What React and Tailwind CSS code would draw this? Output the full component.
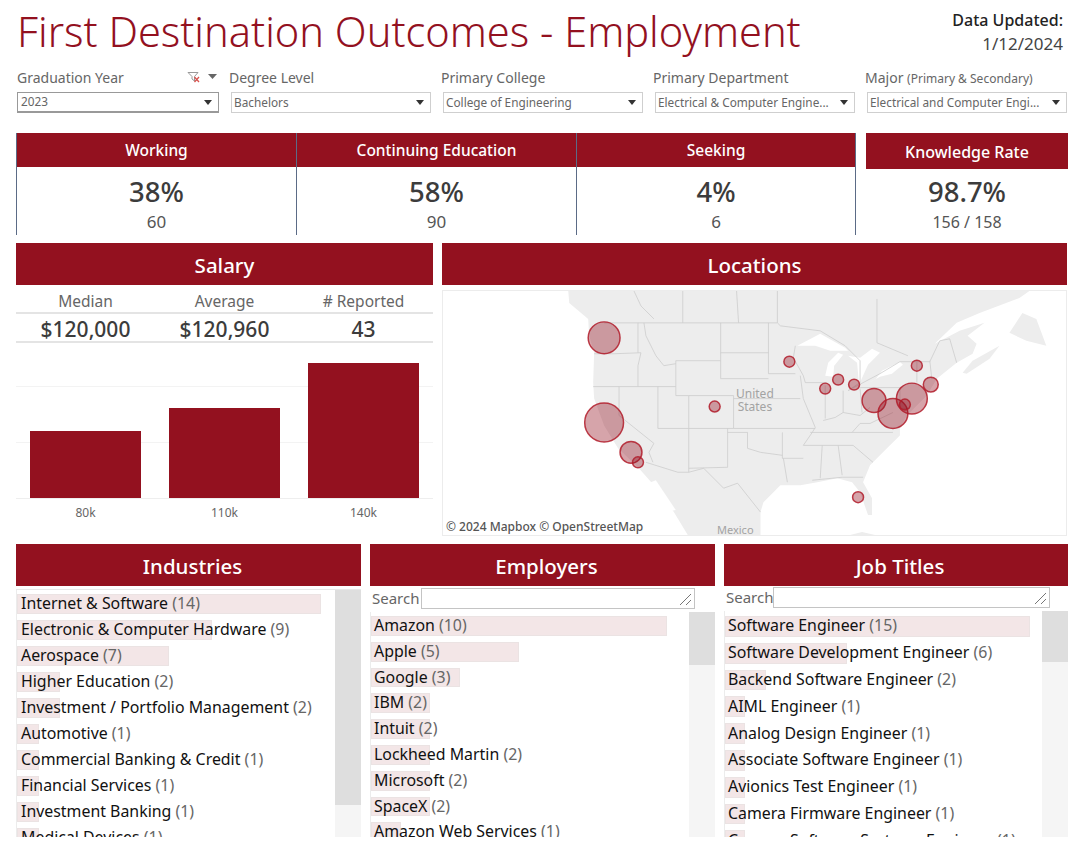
import React from 'react';

const filters = [
  { label: 'Graduation Year', value: '2023', active: true },
  { label: 'Degree Level', value: 'Bachelors' },
  { label: 'Primary College', value: 'College of Engineering' },
  { label: 'Primary Department', value: 'Electrical & Computer Engine...' },
  { label: 'Major', sub: '(Primary & Secondary)', value: 'Electrical and Computer Engi...' },
];

const kpis = [
  { title: 'Working', pct: '38%', count: '60' },
  { title: 'Continuing Education', pct: '58%', count: '90' },
  { title: 'Seeking', pct: '4%', count: '6' },
];

const industries = [
  ['Internet & Software', 14], ['Electronic & Computer Hardware', 9], ['Aerospace', 7], ['Higher Education', 2],
  ['Investment / Portfolio Management', 2], ['Automotive', 1], ['Commercial Banking & Credit', 1],
  ['Financial Services', 1], ['Investment Banking', 1], ['Medical Devices', 1],
];

const employers = [
  ['Amazon', 10], ['Apple', 5], ['Google', 3], ['IBM', 2], ['Intuit', 2], ['Lockheed Martin', 2],
  ['Microsoft', 2], ['SpaceX', 2], ['Amazon Web Services', 1],
];

const jobTitles = [
  ['Software Engineer', 15], ['Software Development Engineer', 6], ['Backend Software Engineer', 2],
  ['AIML Engineer', 1], ['Analog Design Engineer', 1], ['Associate Software Engineer', 1],
  ['Avionics Test Engineer', 1], ['Camera Firmware Engineer', 1], ['Camera Software Systems Engineer', 1],
];

const bubbles = [
  [603, 337, 16], [603, 422, 19.5], [630, 452, 11], [637, 462, 5.5], [714, 406, 5.5], [789, 361, 5.5],
  [838, 379, 5.5], [825, 388, 5.5], [854, 384, 5.5], [874, 400, 12], [893, 413, 15], [912, 398, 15.5],
  [905, 404, 5.5], [931, 384, 7.5], [917, 365, 5.5], [858, 497, 5.5],
];

const borders = [
  'M603 322H777L780 325L820 330L845 345L860 360V382L848 390L880 373L900 361H930L940 340L950 338L957 362',
  'M633 290L640 305L653 318M682 290V322M736 290L738 322M777 290V322M877 298V342L908 355',
  'M593 353H613L640 352M637 322V352M640 352L637 365V386M592 386H675M643 322L645 335L655 355L663 365L675 363',
  'M720 322V378M675 360H720M675 360V395H688M688 395H733V428H688M618 386V415L653 443M657 386V428H688M688 395V472',
  'M653 443L648 452L652 462M727 428V467L688 468M645 462L677 472H688L703 468L723 488L737 483L760 512',
  'M720 352H768M720 378H768M768 322L768 373H795M795 345L793 357L803 375L805 382H827M733 398H800M800 375L803 398L815 427',
  'M825 385V418M810 432H893M733 428H815M727 432H747V448L760 452L782 455M782 432V458H803M783 458L787 482M822 445L820 478',
  'M838 445L842 475M803 445H853L873 462M812 480L842 477H863M843 390V412M823 420L835 417L843 412L860 415L870 407',
  'M860 388L862 412M860 387H900V408H910M852 432L860 423H870L893 412M917 360V382M930 360L932 378M803 445L812 432L815 427',
];

const Header = ({ children, className }) => (
  <div className={`bg-[#93111f] text-white flex items-center justify-center font-medium ${className}`}>{children}</div>
);

const FilterIcon = () => (
  <svg className="w-[32px] h-[12px]" viewBox="0 0 32 12">
    <path d="M1 1.500H11L7.500 5.500V10L5 8V5.500Z" fill="none" stroke="#999" strokeWidth="1" />
    <path d="M7.500 6L12 11M12 6L7.500 11" stroke="#d9534f" strokeWidth="1.3" />
    <path d="M21 3H30L25.500 8Z" fill="#666" />
  </svg>
);

const Caret = () => (
  <svg className="w-[8px] h-[5px] shrink-0" viewBox="0 0 8 5">
    <path d="M0 0H8L4 5Z" fill="#333" />
  </svg>
);

const Filter = ({ label, sub, value, active }) => (
  <div className="w-[202px] flex flex-col">
    <div className="h-[20px] flex items-center justify-between text-[14px] text-[#666]">
      <span className="whitespace-nowrap">
        {label} {sub && <span className="text-[12px]">{sub}</span>}
      </span>
      {active && <FilterIcon />}
    </div>
    <div className={`mt-[5px] h-[21px] bg-white border flex items-center justify-between pr-[6px] text-[11.8px] text-[#666] ${active ? 'pl-[3px] border-[#999] border-b-2' : 'pl-[2px] ml-[2px] border-[#cfcfcf]'}`}>
      <span className="truncate">{value}</span>
      <Caret />
    </div>
  </div>
);

const Kpi = ({ title, pct, count }) => (
  <div className="w-[280px] border-l border-[#5b6b86] last:border-r">
    <Header className="h-[34px] pt-[1px] text-[15.5px]">{title}</Header>
    <div className="flex flex-col items-center pt-[7px]">
      <span className="text-[27.5px] leading-[36px] font-medium text-[#3c3c3c]">{pct}</span>
      <span className="text-[17px] leading-[24px] text-[#555]">{count}</span>
    </div>
  </div>
);

const SalaryBar = ({ top }) => (
  <div className="w-[111px] bg-[#93111f]" style={{ height: 135 - top }} />
);

const SearchBox = ({ className, labelClass }) => (
  <div className={`flex items-center h-[22px] ${className}`}>
    <span className={`pl-[2px] text-[15px] text-[#666] ${labelClass}`}>Search</span>
    <div className="relative flex-1 h-[21px] border border-[#c4c4c4] bg-white">
      <svg className="absolute right-[2px] bottom-[2px] w-[14px] h-[14px]" viewBox="0 0 14 14">
        <path d="M2 13L13 2M8 13L13 8" stroke="#777" strokeWidth="1" />
      </svg>
    </div>
  </div>
);

const RankList = ({ rows, unit, step, thumb, top, textClass }) => (
  <div className="flex h-full">
    <div className="flex-1 min-w-0 border-l border-[#ececec]" style={{ paddingTop: top }}>
      {rows.map(([name, n]) => (
        <div key={name} className="relative flex items-center whitespace-nowrap text-[15.9px]" style={{ height: step }}>
          <div className="absolute left-0 top-[3px] bottom-[3px] bg-[#f3e6e7] border border-[#ebe3e3]" style={{ width: n * unit }} />
          <span className={`relative text-[#111] ${textClass}`}>
            {name} <span className="text-[#666]">({n})</span>
          </span>
        </div>
      ))}
    </div>
    <div className="w-[26px] shrink-0 bg-[#f5f5f5]">
      <div className="bg-[#dedede]" style={{ height: thumb }} />
    </div>
  </div>
);

const UsMap = () => (
  <div className="relative mt-[5px] h-[246px] border border-[#ececec] overflow-hidden">
    <svg className="absolute inset-0 w-full h-full" viewBox="442 290 624 245">
      <path
        d="M567 290L568 302L587 318L588 335L593 352L592 382L593 398L603 425L617 448L637 467L653 485L673 512L687 535H760V512L763 502L780 485L800 485L817 482L837 478L852 482L860 492L868 515L872 515L872 498L863 482L870 465L887 448L900 435V428L907 415L927 395L937 378L957 362L973 353L977 343L968 335L985 322L960 330L935 343L957 322L980 312L1020 297L1030 290Z"
        fill="#ededed"
      />
      <path d="M963 372L973 360L1000 345L990 358L967 373Z" fill="#ededed" />
      <path d="M1010 332L1023 312L1037 318L1047 345L1027 340Z" fill="#ededed" />
      <path d="M850 535L862 532L875 535Z" fill="#ededed" />
      <path d="M797 345L820 333L845 347L848 350L830 350L815 345Z" fill="#fff" />
      <path d="M825 375L828 362L838 352L843 354L834 365L833 376Z" fill="#fff" />
      <path d="M848 355L860 357L872 348L880 352L868 364L859 384L857 362Z" fill="#fff" />
      <path d="M860 387L876 378L882 370L900 361L903 364L892 373L880 376Z" fill="#fff" />
      <path d="M642 485L655 480L675 510L665 512Z" fill="#fff" />
      {borders.map((d, i) => (
        <path key={i} d={d} fill="none" stroke="#cdcdcd" strokeWidth="0.8" />
      ))}
      {bubbles.map(([cx, cy, r], i) => (
        <circle key={i} cx={cx} cy={cy} r={r} fill="#93111f" fillOpacity="0.38" stroke="#b11c2a" strokeOpacity="0.85" strokeWidth="1.5" />
      ))}
    </svg>
    <span className="absolute left-[293px] top-[96px] text-[12px] leading-[13px] text-center text-[#a3a3a3]">
      United
      <br />
      States
    </span>
    <span className="absolute left-[274px] top-[232px] text-[11px] leading-[13px] text-[#a3a3a3]">Mexico</span>
    <span className="absolute left-[3px] top-[228px] text-[12px] leading-[15px] font-medium text-[#555] bg-white/80">© 2024 Mapbox  © OpenStreetMap</span>
  </div>
);

export default function App() {
  return (
    <div className="w-[1080px] h-[847px] overflow-hidden bg-white pl-[16px] pr-[12px] font-['Noto_Sans',sans-serif]">
      <div className="h-[837px] overflow-hidden">
        <div className="h-[64px] flex justify-between">
          <h1 className="pl-[1px] pt-[6px] text-[41.5px] leading-[50px] font-light text-[#93111f] whitespace-nowrap">First Destination Outcomes - Employment</h1>
          <div className="pt-[9px] pr-[5px] text-right leading-[23px] text-[#222]">
            <div className="text-[16px] font-medium">Data Updated:</div>
            <div className="text-[17px] text-[#444]">1/12/2024</div>
          </div>
        </div>

        <div className="flex gap-[10px] pl-[1px] pt-[3px]">
          {filters.map((f) => (
            <Filter key={f.label} {...f} />
          ))}
        </div>

        <div className="mt-[20px] h-[102px] flex justify-between">
          <div className="flex">
            {kpis.map((k) => (
              <Kpi key={k.title} {...k} />
            ))}
          </div>
          <div className="w-[202px]">
            <Header className="h-[36px] pt-[1px] text-[16px]">Knowledge Rate</Header>
            <div className="flex flex-col items-center pt-[5px]">
              <span className="text-[27.5px] leading-[36px] font-medium text-[#3c3c3c]">98.7%</span>
              <span className="text-[16px] leading-[24px] text-[#555]">156 / 158</span>
            </div>
          </div>
        </div>

        <div className="mt-[8px] h-[292px] flex justify-between">
          <div className="w-[417px]">
            <Header className="h-[42px] pt-[2px] text-[20.5px]">Salary</Header>
            <div className="grid grid-cols-3 h-[29px] pt-[5px] items-center text-center text-[15.5px] text-[#666] border-b-2 border-[#e4e4e4]">
              <span>Median</span>
              <span>Average</span>
              <span># Reported</span>
            </div>
            <div className="grid grid-cols-3 h-[29px] items-center text-center text-[21px] font-medium text-[#3c3c3c] border-b-2 border-[#e4e4e4]">
              <span>$120,000</span>
              <span>$120,960</span>
              <span>43</span>
            </div>
            <div className="mt-[9px] h-[147px] flex flex-col justify-end border-b border-[#eee] relative">
              <div className="absolute left-0 right-0 top-[34px] border-t border-[#f3f3f3]" />
              <div className="absolute left-0 right-0 top-[90px] border-t border-[#f3f3f3]" />
              <div className="relative grid grid-cols-3 items-end justify-items-center">
                <SalaryBar top={68} />
                <SalaryBar top={45} />
                <SalaryBar top={0} />
              </div>
            </div>
            <div className="grid grid-cols-3 pt-[5px] text-center text-[12px] text-[#666]">
              <span>80k</span>
              <span>110k</span>
              <span>140k</span>
            </div>
          </div>
          <div className="w-[625px] mr-[1px]">
            <Header className="h-[42px] pt-[2px] text-[20.5px]">Locations</Header>
            <UsMap />
          </div>
        </div>

        <div className="mt-[9px] grid grid-cols-[345px_345px_344px] gap-[9px]">
          <div>
            <Header className="h-[42px] pt-[2px] pl-[8px] text-[20.5px]">Industries</Header>
            <div className="h-[251px] mt-[3px] border-t border-[#e8e8e8]">
              <RankList rows={industries} unit={21.7} step={26} thumb={215} top={1} textClass="pl-[4px]" />
            </div>
          </div>
          <div>
            <Header className="h-[42px] pt-[2px] pl-[8px] text-[20.5px]">Employers</Header>
            <SearchBox className="mt-[1px] pr-[20px]" labelClass="w-[51px]" />
            <div className="h-[226px] mt-[3px]">
              <RankList rows={employers} unit={29.6} step={25.8} thumb={53} top={1} textClass="pl-[3px]" />
            </div>
          </div>
          <div>
            <Header className="h-[42px] pt-[2px] pl-[8px] text-[20.5px]">Job Titles</Header>
            <SearchBox className="pr-[18px]" labelClass="w-[49px]" />
            <div className="h-[226px] mt-[3px]">
              <RankList rows={jobTitles} unit={20.3} step={26.8} thumb={51} top={2} textClass="pl-[3px]" />
            </div>
          </div>
        </div>
      </div>
    </div>
  );
}
